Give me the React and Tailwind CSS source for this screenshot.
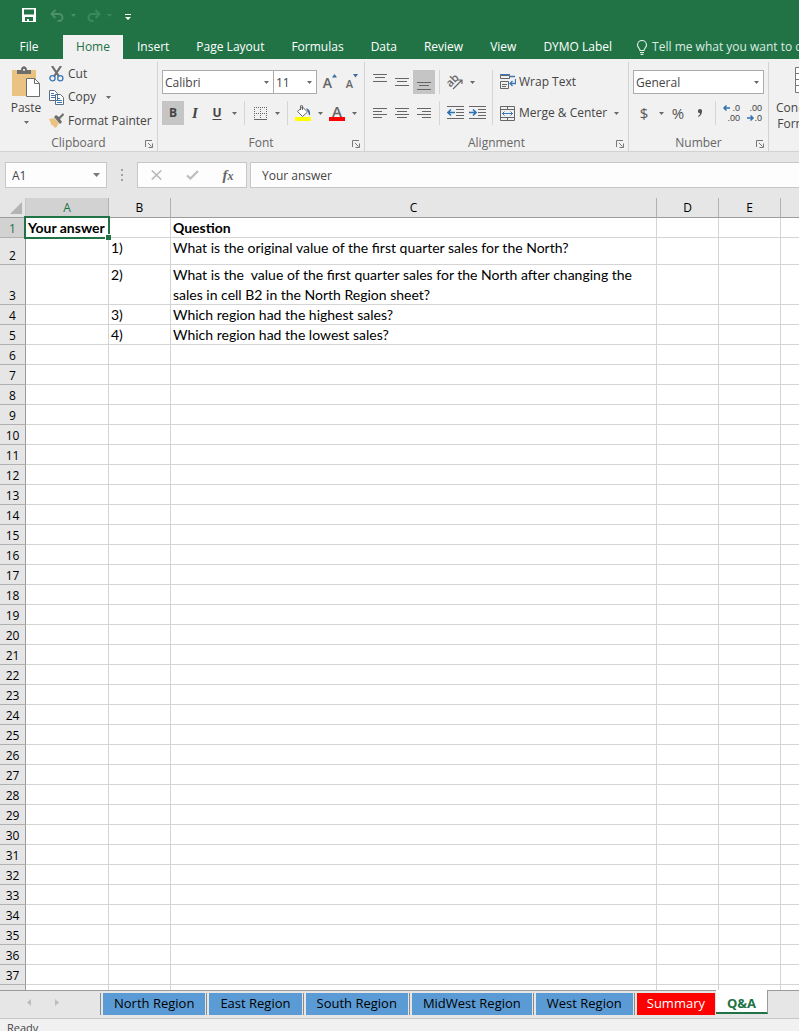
import React, { useState } from 'react';

const MENU_TABS = ['Home', 'Insert', 'Page Layout', 'Formulas', 'Data', 'Review', 'View', 'DYMO Label'];

const COLUMNS = ['A', 'B', 'C', 'D', 'E', 'F'];

const CELLS = {
  A1: 'Your answer',
  C1: 'Question',
  B2: '1)',
  C2: 'What is the original value of the first quarter sales for the North?',
  B3: '2)',
  C3: 'What is the  value of the first quarter sales for the North after changing the sales in cell B2 in the North Region sheet?',
  B4: '3)',
  C4: 'Which region had the highest sales?',
  B5: '4)',
  C5: 'Which region had the lowest sales?',
};

const ROWS = Array.from({ length: 38 }, (_, i) => i + 1);

const SHEETS = ['North Region', 'East Region', 'South Region', 'MidWest Region', 'West Region', 'Summary', 'Q&A'];

function rowHeight(row) {
  if (row === 2) return 'h-[27px]';
  if (row === 3) return 'h-10';
  return 'h-5';
}

function Arrow({ className = 'text-[#6a6a6a]' }) {
  return (
    <svg width="5" height="3" viewBox="0 0 5 3" className={className} aria-hidden="true">
      <path d="M0 0h5L2.5 3z" fill="currentColor" />
    </svg>
  );
}

function ArrowButton({ label }) {
  return (
    <button type="button" aria-label={label} className="flex h-6 w-3 items-center justify-center">
      <Arrow />
    </button>
  );
}

function Tool({ label, active, children }) {
  return (
    <button
      type="button"
      aria-label={label}
      className={`flex h-6 w-[22px] items-center justify-center ${active ? 'bg-[#c5c5c5]' : ''}`}
    >
      {children}
    </button>
  );
}

function Divider() {
  return <div className="mx-1 h-6 w-px bg-[#d5d5d5]" />;
}

function DropDown({ label, options, className }) {
  return (
    <div className={`relative h-6 border border-[#ababab] bg-white ${className}`}>
      <select
        aria-label={label}
        className="h-full w-full appearance-none bg-transparent pl-[2px] pt-px text-[12px] leading-5 text-[#444444] outline-none"
      >
        {options.map(o => (
          <option key={o}>{o}</option>
        ))}
      </select>
      <span className="pointer-events-none absolute inset-y-0 right-1 flex items-center">
        <Arrow />
      </span>
    </div>
  );
}

function Group({ title, className, launcher = true, children }) {
  return (
    <section className={`flex shrink-0 flex-col border-r border-[#d2d2d2] ${className}`}>
      <div className="h-[73px]">{children}</div>
      <div className="relative h-4 text-center leading-4 text-[#666666]">
        {title}
        {launcher && (
          <button type="button" aria-label={`${title} settings`} className="absolute right-1 top-[5px]">
            <svg width="8" height="8" viewBox="0 0 8 8" fill="none" stroke="#777777" aria-hidden="true">
              <path d="M.5 7V.5H7M3 3l3.5 3.5M7.5 3.5v4h-4" />
            </svg>
          </button>
        )}
      </div>
    </section>
  );
}

function Lines({ d }) {
  return (
    <svg width="14" height="16" viewBox="0 0 14 16" stroke="#666666" fill="none" aria-hidden="true">
      <path d={d} />
    </svg>
  );
}

function TitleBar() {
  return (
    <div className="flex h-[35px] items-center pb-[5px] pl-[22px]">
      <button type="button" aria-label="Save">
        <svg width="14" height="14" viewBox="0 0 14 14" aria-hidden="true">
          <path fillRule="evenodd" fill="#ffffff" d="M0 0h14v14H0zM2 1.5v5h10v-5zM3 9v4h2v-2h2v2h4V9z" />
        </svg>
      </button>
      <button type="button" aria-label="Undo" className="ml-[14px] flex items-center gap-[6px] text-[#4b9069]">
        <svg width="15" height="13" viewBox="0 0 15 13" fill="none" stroke="currentColor" strokeWidth="2" aria-hidden="true">
          <path d="M5.5 1L1.5 5l4 4M2 5h7a3.5 3.5 0 0 1 0 7H7.5" />
        </svg>
        <Arrow className="text-[#4b9069]" />
      </button>
      <button type="button" aria-label="Redo" className="ml-[10px] flex items-center gap-[6px] text-[#3d875d]">
        <svg width="15" height="13" viewBox="0 0 15 13" fill="none" stroke="currentColor" strokeWidth="2" aria-hidden="true">
          <path d="M9.5 1l4 4-4 4M13 5H6a3.5 3.5 0 0 0 0 7h1.5" />
        </svg>
        <Arrow className="text-[#3d875d]" />
      </button>
      <button type="button" aria-label="Customize toolbar" className="ml-[13px] pt-1">
        <svg width="6" height="6" viewBox="0 0 6 6" fill="#ffffff" aria-hidden="true">
          <path d="M0 0h6v1H0zM0 3h6L3 6z" />
        </svg>
      </button>
    </div>
  );
}

function MenuBar() {
  return (
    <nav className="flex h-6 items-stretch text-white">
      <button type="button" className="w-[58px] shrink-0">File</button>
      <div className="ml-[5px] flex shrink-0">
        {MENU_TABS.map(tab => (
          <button
            key={tab}
            type="button"
            className={tab === 'Home' ? 'w-[60px] bg-[#f1f1f1] text-[#217346]' : 'pl-[14px] pr-[13px]'}
          >
            {tab}
          </button>
        ))}
      </div>
      <button type="button" className="ml-[11px] flex shrink-0 items-center gap-1 text-[#dcebe2]">
        <svg width="12" height="15" viewBox="0 0 12 15" fill="none" stroke="currentColor" strokeWidth="1.2" aria-hidden="true">
          <path d="M4 10.5C4 8.5 1.5 7.7 1.5 5a4.5 4.5 0 0 1 9 0c0 2.7-2.5 3.5-2.5 5.5zM4 12.5h4M4.500 14.300h3" />
        </svg>
        Tell me what you want to do...
      </button>
    </nav>
  );
}

function ClipboardGroup() {
  return (
    <Group title="Clipboard" className="w-[158px]">
      <div className="flex">
        <button type="button" className="flex w-[49px] flex-col items-center pl-[3px] pt-[4px]">
          <svg width="30" height="32" viewBox="0 0 30 32" aria-hidden="true">
            <path fill="#eac282" d="M1 4h24v26H1z" />
            <path fill="#6d6d6d" d="M6 8V4h4c0-5 6-5 6 0h4v4zM12 3v2h2V3z" fillRule="evenodd" />
            <path fill="#ffffff" stroke="#6d6d6d" d="M15.5 12.5h8l5 5v13h-13z" />
            <path fill="none" stroke="#6d6d6d" d="M23.5 12.5v5h5" />
          </svg>
          <span className="mt-[2px] leading-4">Paste</span>
          <span className="mt-[5px]"><Arrow /></span>
        </button>
        <div className="flex flex-col">
          <button type="button" className="flex h-[23px] items-center gap-1">
            <svg width="15" height="16" viewBox="0 0 15 16" fill="none" aria-hidden="true">
              <path d="M3 0l7 10.5M12 0L5 10.5" stroke="#6d6d6d" strokeWidth="2.2" />
              <circle cx="3.5" cy="12.2" r="2.6" stroke="#3c78b4" strokeWidth="1.3" />
              <circle cx="11.3" cy="12.2" r="2.6" stroke="#3c78b4" strokeWidth="1.3" />
            </svg>
            Cut
          </button>
          <div className="flex items-center">
            <button type="button" className="flex h-[23px] items-center gap-1">
              <svg width="15" height="15" viewBox="0 0 15 15" fill="#ffffff" stroke="#5b6f80" aria-hidden="true">
                <path d="M.5.5h5l3 3v7h-8zM6.5 4.5h5l3 3v7h-8z" />
                <path d="M2 3.5h3M2 5.5h4M2 7.5h4M8 8.5h3M8 10.5h5M8 12.5h5" stroke="#3c78b4" />
              </svg>
              Copy
            </button>
            <span className="pl-[6px]"><ArrowButton label="Copy options" /></span>
          </div>
          <button type="button" className="flex h-[23px] items-center gap-1 whitespace-nowrap">
            <svg width="15" height="15" viewBox="0 0 15 15" aria-hidden="true">
              <path fill="#eac282" d="M0 6l5-1 5 5-3 5-2-1-1-2-1 1z" />
              <path fill="#6d6d6d" d="M5 4l2-2 3 2 4-4 1 2-4 4 2 3-2 2z" />
            </svg>
            Format Painter
          </button>
        </div>
      </div>
    </Group>
  );
}

function FontGroup() {
  return (
    <Group title="Font" className="w-[207px]">
      <div className="flex flex-col gap-[7px] pl-1 pt-2">
        <div className="flex items-center">
          <DropDown label="Font" options={['Calibri', 'Arial', 'Verdana']} className="w-[112px]" />
          <DropDown label="Font size" options={['11', '12', '14']} className="-ml-px w-11" />
          <span className="ml-[2px] flex">
            <Tool label="Increase font size">
              <span className="pt-px text-[14px] font-semibold leading-5 text-[#666666]">A</span>
              <svg width="5" height="16" viewBox="0 0 5 16" aria-hidden="true">
                <path d="M0 3.5h5L2.5 0z" fill="#3c6c9e" />
              </svg>
            </Tool>
            <Tool label="Decrease font size">
              <span className="pt-[3px] text-[11px] font-semibold leading-5 text-[#666666]">A</span>
              <svg width="5" height="16" viewBox="0 0 5 16" aria-hidden="true">
                <path d="M0 0h5L2.5 3.5z" fill="#3c6c9e" />
              </svg>
            </Tool>
          </span>
        </div>
        <div className="flex items-center">
          <Tool label="Bold" active><b>B</b></Tool>
          <Tool label="Italic"><i className="font-['Liberation_Serif',serif] text-[15px] font-bold">I</i></Tool>
          <Tool label="Underline"><b className="underline underline-offset-2">U</b></Tool>
          <ArrowButton label="Underline options" />
          <Divider />
          <Tool label="Borders">
            <svg width="13" height="13" viewBox="0 0 13 13" fill="none" stroke="#666666" aria-hidden="true">
              <path strokeDasharray="1 1" d="M0 .5h13M0 6.5h13M.5 0v13M6.5 0v13M12.5 0v13" />
              <path d="M0 12.5h13" />
            </svg>
          </Tool>
          <ArrowButton label="Border options" />
          <Divider />
          <Tool label="Fill color">
            <svg width="16" height="16" viewBox="0 0 16 16" aria-hidden="true">
              <path d="M2.5 6.5l5-4.500 5 5-5 4.500zM5.5 5V.8h2V5" fill="#ffffff" stroke="#666666" />
              <path d="M11 3.5c3 0 4.500 2.500 4 7-1.500-.5-1.500-2.500-2-4z" fill="#3c6c9e" />
              <path d="M0 12h16v4H0z" fill="#ffff00" />
            </svg>
          </Tool>
          <ArrowButton label="Fill color options" />
          <Tool label="Font color">
            <span className="flex w-4 flex-col items-center border-b-4 border-[#ff0000] text-[15px] font-semibold leading-3 text-[#666666]">A</span>
          </Tool>
          <ArrowButton label="Font color options" />
        </div>
      </div>
    </Group>
  );
}

function IndentIcon({ d }) {
  return (
    <svg width="17" height="14" viewBox="0 0 17 14" fill="none" stroke="#666666" aria-hidden="true">
      <path d="M0 .5h17M9 3.5h8M9 6.5h8M9 9.5h8M0 12.5h17" />
      <path d={d} stroke="#2f72b0" strokeWidth="1.7" />
    </svg>
  );
}

function AlignmentGroup() {
  return (
    <Group title="Alignment" className="w-[264px]">
      <div className="flex pl-1 pt-2">
        <div className="flex flex-col gap-[7px]">
          <div className="flex items-center">
            <Tool label="Top align"><Lines d="M0 .5h14M2 3.5h10M0 7.5h14" /></Tool>
            <Tool label="Middle align"><Lines d="M0 4.5h14M2 7.5h10M0 11.5h14" /></Tool>
            <Tool label="Bottom align" active><Lines d="M0 8.5h14M2 11.5h10M0 15.5h14" /></Tool>
            <Divider />
            <Tool label="Orientation">
              <svg width="17" height="16" viewBox="0 0 17 16" className="overflow-visible" aria-hidden="true">
                <text x="0" y="10" transform="rotate(-45 6 8)" fontSize="11" fontWeight="600" fill="#666666">ab</text>
                <path d="M6 15l9-9M11 6h4v4" fill="none" stroke="#666666" strokeWidth="1.2" />
              </svg>
            </Tool>
            <ArrowButton label="Orientation options" />
          </div>
          <div className="flex items-center">
            <Tool label="Align left"><Lines d="M0 3.5h14M0 6.5h9M0 9.5h14M0 12.5h9" /></Tool>
            <Tool label="Center"><Lines d="M0 3.5h14M2 6.5h10M0 9.5h14M2 12.5h10" /></Tool>
            <Tool label="Align right"><Lines d="M0 3.5h14M5 6.5h9M0 9.5h14M5 12.5h9" /></Tool>
            <Divider />
            <Tool label="Decrease indent"><IndentIcon d="M8 6.5H1M4 3.5l-3 3 3 3" /></Tool>
            <Tool label="Increase indent"><IndentIcon d="M0 6.5h7M4 3.5l3 3-3 3" /></Tool>
          </div>
        </div>
        <div className="mx-1 w-px bg-[#d5d5d5]" />
        <div className="flex flex-col gap-[7px] pl-[3px]">
          <button type="button" className="flex h-6 items-center gap-[3px] whitespace-nowrap">
            <svg width="16" height="16" viewBox="0 0 16 16" fill="none" stroke="#666666" aria-hidden="true">
              <path d="M.5 1.5h9v3h-9zM.5 7.5h8v7h-8zM2 10.5h5M2 12.5h4" />
              <path d="M0 .5h10" stroke="#3c78b4" />
              <path d="M10 2.5h5M15.5 5v4.5H10M12.5 7L10 9.5l2.5 2.5" stroke="#3c78b4" strokeWidth="1.3" />
            </svg>
            Wrap Text
          </button>
          <div className="flex items-center">
            <button type="button" className="flex h-6 items-center gap-1 whitespace-nowrap">
              <svg width="15" height="15" viewBox="0 0 15 15" fill="none" stroke="#666666" aria-hidden="true">
                <path d="M.5.5h14v14H.5zM.5 3.5h14M.5 11.5h14M7.5 0v3.5M7.5 11.5V15" />
                <path d="M2 7.5h11M4.5 5.5l-2 2 2 2M10.5 5.5l2 2-2 2" stroke="#3c78b4" />
              </svg>
              Merge &amp; Center
            </button>
            <span className="pl-[3px]"><ArrowButton label="Merge options" /></span>
          </div>
        </div>
      </div>
    </Group>
  );
}

function DecimalIcon({ top, bottom, d }) {
  return (
    <svg
      width="17"
      height="20"
      viewBox="0 0 17 20"
      className="overflow-visible font-['Liberation_Sans',sans-serif]"
      aria-hidden="true"
      fontSize="9"
      fill="#444444"
    >
      <text x="17" y="8" textAnchor="end">{top}</text>
      <text x="17" y="18" textAnchor="end">{bottom}</text>
      <path d={d} fill="none" stroke="#2f72b0" strokeWidth="1.5" />
    </svg>
  );
}

function NumberGroup() {
  return (
    <Group title="Number" className="w-[140px]">
      <div className="flex flex-col gap-[7px] px-1 pt-2">
        <DropDown label="Number format" options={['General', 'Number', 'Currency']} className="w-full" />
        <div className="flex items-center text-[#555555]">
          <Tool label="Accounting format"><span className="text-[15px]">$</span></Tool>
          <ArrowButton label="Currency options" />
          <Tool label="Percent style"><span className="text-[15px]">%</span></Tool>
          <Tool label="Comma style">
            <svg width="6" height="8" viewBox="0 0 6 8" aria-hidden="true">
              <path d="M3 0a2 2 0 0 1 2 2.5C5 5 3.5 7 1.5 8L1 7.2C2.2 6.5 3 5.5 3 4.3A2 2 0 0 1 3 0z" fill="#555555" />
            </svg>
          </Tool>
          <Divider />
          <Tool label="Increase decimal"><DecimalIcon top=".0" bottom=".00" d="M7 5H1M3.5 2.5L1 5l2.5 2.5" /></Tool>
          <Tool label="Decrease decimal"><DecimalIcon top=".00" bottom=".0" d="M2 15h6M5.5 12.5L8 15l-2.5 2.5" /></Tool>
        </div>
      </div>
    </Group>
  );
}

function Ribbon() {
  return (
    <div className="flex h-[93px] overflow-hidden border-b border-[#d2d2d2] bg-[#f1f1f1] pt-[3px] text-[#444444]">
      <ClipboardGroup />
      <FontGroup />
      <AlignmentGroup />
      <NumberGroup />
      <button type="button" className="ml-[7px] flex shrink-0 flex-col items-center justify-start pt-[5px]">
        <svg width="26" height="26" viewBox="0 0 26 26" fill="#ffffff" stroke="#777777" aria-hidden="true">
          <path d="M.5.5h25v25H.5zM.5 6.5h25M.5 12.5h25M.5 18.5h25M13 .5v25" />
        </svg>
        <span className="mt-[7px] leading-4">Conditional</span>
        <span className="leading-4">Formatting</span>
      </button>
    </div>
  );
}

function FormulaBar({ value, onChange }) {
  return (
    <div className="flex h-[46px] shrink-0 items-center bg-[#e6e6e6] pl-[5px] text-[#444444]">
      <div className="relative h-[26px] w-[102px] shrink-0 border border-[#c6c6c6] bg-[#fdfdfd]">
        <input aria-label="Name box" defaultValue="A1" className="h-full w-full bg-transparent pl-[6px] outline-none" />
        <span className="pointer-events-none absolute inset-y-0 right-[6px] flex items-center">
          <svg width="7" height="4" viewBox="0 0 7 4" aria-hidden="true">
            <path d="M0 0h7L3.5 4z" fill="#777777" />
          </svg>
        </span>
      </div>
      <svg width="30" height="12" viewBox="0 0 30 12" fill="#a0a0a0" aria-hidden="true">
        <path d="M14 0h2v2h-2zM14 5h2v2h-2zM14 10h2v2h-2z" />
      </svg>
      <div className="flex h-[26px] w-[110px] shrink-0 items-center border border-[#c6c6c6] bg-[#fdfdfd]">
        <button type="button" aria-label="Cancel" className="flex w-9 justify-center">
          <svg width="11" height="10" viewBox="0 0 11 10" fill="none" stroke="#b9b9b9" strokeWidth="1.6" aria-hidden="true">
            <path d="M.8.5l9.4 9M10.2.5l-9.4 9" />
          </svg>
        </button>
        <button type="button" aria-label="Enter" className="flex w-9 justify-center">
          <svg width="13" height="10" viewBox="0 0 13 10" fill="none" stroke="#bdbdbd" strokeWidth="2.2" aria-hidden="true">
            <path d="M1 5.5l3.5 3L12 1" />
          </svg>
        </button>
        <button
          type="button"
          aria-label="Insert function"
          className="w-9 text-center font-['Liberation_Serif',serif] text-[15px] font-bold italic leading-5 text-[#666666]"
        >
          f<span className="text-[12px]">x</span>
        </button>
      </div>
      <input
        aria-label="Formula"
        value={value}
        onChange={e => onChange(e.target.value)}
        className="ml-[3px] h-[26px] min-w-0 flex-1 border border-r-0 border-[#c6c6c6] bg-[#fdfdfd] pl-[11px] outline-none"
      />
    </div>
  );
}

function Grid({ answer }) {
  return (
    <div className="min-h-0 flex-1 overflow-hidden bg-white">
      <table className="w-full table-fixed border-separate border-spacing-0 text-black">
        <colgroup>
          <col className="w-[26px]" />
          <col className="w-[83px]" />
          <col className="w-[62px]" />
          <col className="w-[486px]" />
          <col className="w-[62px]" />
          <col className="w-[62px]" />
          <col />
        </colgroup>
        <thead>
          <tr className="h-5 bg-[#e6e6e6]">
            <th className="border-b border-r border-[#9b9b9b] border-r-[#c6c6c6] p-0">
              <svg width="12" height="12" viewBox="0 0 12 12" className="ml-auto mr-[3px]" aria-hidden="true">
                <path d="M12 0v12H0z" fill="#b4b4b4" />
              </svg>
            </th>
            {COLUMNS.map(col => (
              <th
                key={col}
                scope="col"
                className={`border-b border-r border-[#9b9b9b] border-r-[#b1b1b1] p-0 font-normal leading-[19px] last:border-r-0 ${
                  col === 'A' ? 'bg-[#d2d2d2] text-[#217346]' : ''
                }`}
              >
                {col === 'F' ? '' : col}
              </th>
            ))}
          </tr>
        </thead>
        <tbody>
          {ROWS.map(row => (
            <tr key={row} className={rowHeight(row)}>
              <th
                scope="row"
                className={`border-b border-r border-[#b1b1b1] border-r-[#9b9b9b] p-0 align-bottom font-normal leading-[17px] ${
                  row === 1 ? 'bg-[#d2d2d2] text-[#217346]' : 'bg-[#e6e6e6]'
                }`}
              >
                {row}
              </th>
              {COLUMNS.map(col => {
                const id = `${col}${row}`;
                const text = id === 'A1' ? answer : CELLS[id];
                return (
                  <td
                    key={id}
                    className={`relative border-b border-r border-[#d4d4d4] p-0 pl-[2px] align-top font-[Lato,Calibri,sans-serif] text-[14px] leading-5 last:border-r-0 ${
                      row === 1 ? 'whitespace-nowrap font-bold' : 'whitespace-pre-wrap'
                    }`}
                  >
                    {/* fixed row height, so the text must not push the row taller */}
                    {text && <div className={row === 3 ? 'h-[39px]' : 'h-[19px]'}>{text}</div>}
                    {id === 'A1' && (
                      <div className="pointer-events-none absolute -inset-[2px] z-10 border-2 border-[#217346]">
                        <span className="absolute -bottom-[3px] -right-[3px] h-[6px] w-[6px] border-l border-t border-white bg-[#217346]" />
                      </div>
                    )}
                  </td>
                );
              })}
            </tr>
          ))}
        </tbody>
      </table>
    </div>
  );
}

function SheetTabs({ current, onSelect }) {
  return (
    <div className="flex h-[29px] shrink-0 border-b border-[#c6c6c6] bg-[#e6e6e6] text-[13px]">
      <div className="flex w-[100px] shrink-0 items-center gap-6 border-t border-[#9b9b9b] pb-1 pl-[27px]">
        <button type="button" aria-label="Previous sheet">
          <svg width="4" height="7" viewBox="0 0 4 7" aria-hidden="true"><path d="M4 0v7L0 3.5z" fill="#bdbdbd" /></svg>
        </button>
        <button type="button" aria-label="Next sheet">
          <svg width="4" height="7" viewBox="0 0 4 7" aria-hidden="true"><path d="M0 0v7l4-3.5z" fill="#bdbdbd" /></svg>
        </button>
      </div>
      {SHEETS.map(name => {
        if (name === current) {
          return (
            <button key={name} type="button" className="h-6 shrink-0 border-b-2 border-r border-[#217346] border-r-[#9b9b9b] bg-white px-[11px] pt-1 font-bold leading-[18px] text-[#217346]">
              {name}
            </button>
          );
        }
        const color = name === 'Summary' ? 'bg-[#ff0000] px-[10px] text-white' : 'bg-[#5b9bd5] px-[11px] text-black';
        return (
          <div key={name} className="flex shrink-0 border-t border-[#9b9b9b] pr-px pt-[2px]">
            <span className="mr-[2px] h-[22px] w-px bg-[#8a8a8a]" />
            <button type="button" onClick={() => onSelect(name)} className={`h-[22px] pb-[2px] leading-5 ${color}`}>
              {name}
            </button>
          </div>
        );
      })}
      <div className="flex-1 border-t border-[#9b9b9b]" />
    </div>
  );
}

export default function App() {
  const [answer, setAnswer] = useState('Your answer');
  const [sheet, setSheet] = useState('Q&A');

  return (
    <div className="flex h-screen flex-col overflow-hidden bg-[#f1f1f1] font-['Open_Sans','Segoe_UI',sans-serif] text-[12px]">
      <header className="shrink-0">
        <div className="overflow-hidden bg-[#217346]">
          <TitleBar />
          <MenuBar />
        </div>
        <Ribbon />
      </header>
      <FormulaBar value={answer} onChange={setAnswer} />
      <Grid answer={answer} />
      <SheetTabs current={sheet} onSelect={setSheet} />
      <footer className="h-3 shrink-0 pl-[7px] pt-px text-[11px] leading-4 text-[#444444]">Ready</footer>
    </div>
  );
}
